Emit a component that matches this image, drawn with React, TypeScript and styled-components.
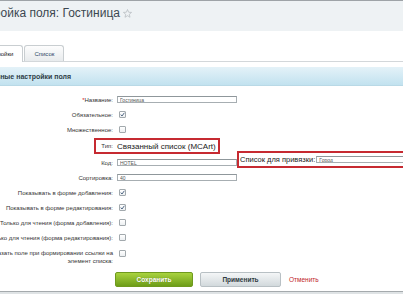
import React from 'react';
import styled, { createGlobalStyle } from 'styled-components';

const GlobalStyle = createGlobalStyle`
  * {
    box-sizing: border-box;
  }

  html,
  body {
    margin: 0;
    padding: 0;
    background: #fff;
    overflow: hidden;
  }

  body {
    width: 403px;
    height: 294px;
    font-family: 'Liberation Sans', Arial, sans-serif;
  }
`;

const fields = [
  { label: 'Обязательное:', checked: true },
  { label: 'Множественное:', checked: false },
];

const flags = [
  { label: 'Показывать в форме добавления:', checked: true },
  { label: 'Показывать в форме редактирования:', checked: true },
  { label: 'Только для чтения (форма добавления):', checked: false },
  { label: 'Только для чтения (форма редактирования):', checked: false },
];

const Star = () => (
  <svg width="9" height="9" viewBox="0 0 10 10">
    <polygon
      points="5,0.6 6.3,3.6 9.5,3.8 7,5.9 7.8,9.2 5,7.4 2.2,9.2 3,5.9 0.5,3.8 3.7,3.6"
      fill="none"
      stroke="#b4babd"
      strokeWidth="0.8"
      strokeLinejoin="round"
    />
  </svg>
);

const Check = ({ checked }: { checked: boolean }) => (
  <CheckBox>
    {checked && (
      <svg width="5" height="5" viewBox="0 0 10 10">
        <path d="M1.5 5.2 L4 8 L8.8 1.5" fill="none" stroke="#3d5676" strokeWidth="1.8" />
      </svg>
    )}
  </CheckBox>
);

const App = () => {
  return (
    <>
      <GlobalStyle />
      <Page>
        <TopBar>
          <Title>
            Настройка поля: Гостиница
            <Star />
          </Title>
        </TopBar>

        <TabBar>
          <Tab $active>Настройки</Tab>
          <Tab>Список</Tab>
        </TabBar>

        <SectionHead>Основные настройки поля</SectionHead>

        <Form>
          <Row>
            <Label>
              <Required>*</Required>Название:
            </Label>
            <Value>
              <Input readOnly value="Гостиница" />
            </Value>
          </Row>

          {fields.map((f) => (
            <Row key={f.label}>
              <Label>{f.label}</Label>
              <Value>
                <Check checked={f.checked} />
              </Value>
            </Row>
          ))}

          <TypeRow>
            <TypeBox>
              <Label>Тип:</Label>
              <TypeValue>Связанный список (MCArt)</TypeValue>
            </TypeBox>
          </TypeRow>

          <Row>
            <Label>Код:</Label>
            <Value>
              <Input readOnly value="HOTEL" />
              <LinkBox>
                <LinkText>Список для привязки:</LinkText>
                <Input readOnly value="Город" $width={150} />
              </LinkBox>
            </Value>
          </Row>

          <Row>
            <Label>Сортировка:</Label>
            <Value>
              <Input readOnly value="40" />
            </Value>
          </Row>

          {flags.map((f) => (
            <Row key={f.label}>
              <Label>{f.label}</Label>
              <Value>
                <Check checked={f.checked} />
              </Value>
            </Row>
          ))}

          <Row $top>
            <Label>Показать поле при формировании ссылки на элемент списка:</Label>
            <Value>
              <Check checked={false} />
            </Value>
          </Row>

          <ButtonsRow>
            <Buttons>
              <SaveButton>Сохранить</SaveButton>
              <ApplyButton>Применить</ApplyButton>
              <CancelLink>Отменить</CancelLink>
            </Buttons>
          </ButtonsRow>
        </Form>

        <Footer />
      </Page>
    </>
  );
};

export default App;

const Page = styled.div`
  width: 443px;
  height: 294px;
  margin-left: -40px;

  display: flex;
  flex-direction: column;
`;

const TopBar = styled.div`
  height: 31px;
  padding: 5px 0 0 7px;

  border-top: 1px solid #9ea3a7;
  background: #eef2f4;
`;

const Title = styled.div`
  display: flex;
  align-items: center;
  gap: 3px;

  color: #3b4750;
  font-size: 12px;
  line-height: 14px;
`;

const TabBar = styled.div`
  height: 31px;
  padding-left: 14px;

  display: flex;
  align-items: flex-end;
  gap: 1px;

  border-bottom: 1px solid #d3d7da;
`;

const Tab = styled.div<{ $active?: boolean }>`
  height: ${(p) => (p.$active ? '17px' : '16px')};
  margin-bottom: ${(p) => (p.$active ? '-1px' : '0')};
  padding: 0 9px;

  display: flex;
  align-items: center;

  border: 1px solid #c9ced1;
  border-bottom: none;
  border-radius: 3px 3px 0 0;
  background: ${(p) => (p.$active ? '#fff' : 'linear-gradient(#fdfdfd, #e8ebed)')};

  color: ${(p) => (p.$active ? '#222' : '#2c4866')};
  font-size: 6px;
`;

const SectionHead = styled.div`
  height: 19px;
  margin-top: 5px;
  padding-left: 18px;

  display: flex;
  align-items: center;

  background: linear-gradient(#e4f2f8, #c2e2ef);
  border-bottom: 1px solid #b9d9e6;

  color: #2e3d47;
  font-size: 7px;
  font-weight: 700;
`;

const Form = styled.div`
  padding: 6px 0 0 23px;

  display: flex;
  flex-direction: column;
`;

const Row = styled.div<{ $top?: boolean }>`
  min-height: 15px;
  padding-top: ${(p) => (p.$top ? '4px' : '0')};

  display: grid;
  grid-template-columns: 130px 1fr;
  column-gap: 4px;
  align-items: ${(p) => (p.$top ? 'start' : 'center')};
`;

const Label = styled.div`
  text-align: right;
  color: #333;
  font-size: 6px;
  line-height: 8px;
`;

const Required = styled.span`
  color: #d42020;
`;

const Value = styled.div`
  display: flex;
  align-items: center;
`;

const Input = styled.input<{ $width?: number }>`
  width: ${(p) => p.$width ?? 120}px;
  height: 7px;
  padding: 0 2px;
  flex-shrink: 0;

  border: 1px solid #a7aeb2;
  border-top-color: #8f979b;
  background: #fff;
  outline: none;

  color: #555;
  font-family: 'Liberation Sans', Arial, sans-serif;
  font-size: 5px;
  line-height: 5px;
`;

const CheckBox = styled.span`
  width: 7px;
  height: 7px;
  margin: 0.5px 0 0 2px;

  display: flex;
  align-items: center;
  justify-content: center;

  border: 1px solid #a2a9ad;
  border-radius: 1px;
  background: linear-gradient(#fff, #eceff1);
`;

const TypeRow = styled.div`
  height: 18px;

  display: flex;
  align-items: center;
`;

const TypeBox = styled.div`
  width: 126px;
  height: 16px;
  margin-left: 111px;

  display: grid;
  grid-template-columns: 17px 1fr;
  column-gap: 4px;
  align-items: center;

  border: 2px solid #c62a31;
  background: #fff;
`;

const TypeValue = styled.div`
  color: #222;
  font-size: 8px;
  white-space: nowrap;
`;

const LinkBox = styled.div`
  width: 200px;
  height: 17px;
  margin-top: -6px;
  padding-left: 1px;
  flex-shrink: 0;

  display: flex;
  align-items: center;
  gap: 1px;

  border: 2px solid #c62a31;
  background: #fff;
`;

const LinkText = styled.div`
  color: #222;
  font-size: 7.5px;
  white-space: nowrap;
`;

const ButtonsRow = styled.div`
  margin: 7px 0 4px;

  display: grid;
  grid-template-columns: 130px 1fr;
  column-gap: 4px;
`;

const Buttons = styled.div`
  grid-column: 2;
  margin-left: -2px;

  display: flex;
  align-items: center;
  gap: 7px;
`;

const SaveButton = styled.div`
  width: 78px;
  height: 15px;

  display: flex;
  align-items: center;
  justify-content: center;

  border: 1px solid #6f9a1e;
  border-radius: 2px;
  background: linear-gradient(#a9d33f, #6d9d18);

  color: #fff;
  font-size: 6.5px;
  font-weight: 700;
  text-shadow: 0 0 1px rgba(0, 0, 0, 0.3);
`;

const ApplyButton = styled.div`
  width: 81px;
  height: 15px;

  display: flex;
  align-items: center;
  justify-content: center;

  border: 1px solid #b8c0c4;
  border-radius: 2px;
  background: linear-gradient(#f4f6f7, #d2d9dc);

  color: #2f3a40;
  font-size: 6.5px;
  font-weight: 700;
`;

const CancelLink = styled.div`
  margin-left: 1px;
  color: #c1272d;
  font-size: 6.5px;
`;

const Footer = styled.div`
  flex: 1;
  border-top: 1px solid #a5aaad;
  background: #dfe3e5;
`;
